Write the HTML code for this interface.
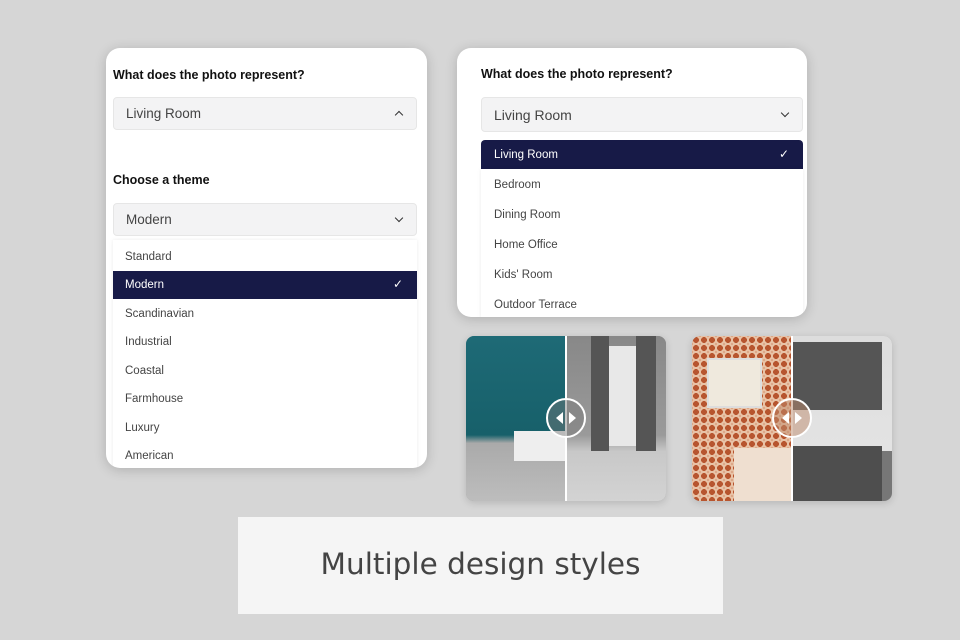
<!DOCTYPE html>
<html><head><style>
*{margin:0;padding:0;box-sizing:border-box}
body{width:960px;height:640px;background:#d6d6d6;position:relative;overflow:hidden;font-family:"Liberation Sans",Arial,sans-serif}
.a{position:absolute}
.card{position:absolute;background:#fff;border-radius:14px;box-shadow:0 2px 12px rgba(0,0,0,.18);overflow:hidden}
.lbl{position:absolute;font-weight:bold;font-size:12.5px;color:#111}
.sel{position:absolute;background:#f3f3f4;border:1px solid #e6e6e6;border-radius:4px;font-size:13.5px;color:#444;padding-left:12px;display:flex;align-items:center}
.it{position:absolute;font-size:11.5px;color:#444}
.band{position:absolute;background:#171a47;color:#fff;font-size:11.5px;display:flex;align-items:center}
.chev{position:absolute;right:14px;top:50%;width:6px;height:6px;border-right:1.5px solid #333;border-bottom:1.5px solid #333}
.ph{position:absolute;border-radius:8px;overflow:hidden;box-shadow:0 2px 8px rgba(0,0,0,.15)}
.knob{position:absolute;width:40px;height:40px;border:2px solid #fff;border-radius:50%;background:rgba(120,120,120,.45)}
.ck{position:absolute;right:14px;font-size:12px;font-weight:normal}
</style></head><body>

<div class="card" style="left:106px;top:48px;width:321px;height:420px">
 <div class="lbl" style="left:7px;top:20px">What does the photo represent?</div>
 <div class="sel" style="left:7px;top:49px;width:304px;height:33px">Living Room<span class="chev" style="transform:translateY(-2px) rotate(-135deg);margin-top:0"></span></div>
 <div class="lbl" style="left:7px;top:125px">Choose a theme</div>
 <div class="sel" style="left:7px;top:155px;width:304px;height:33px">Modern<span class="chev" style="transform:translateY(-5px) rotate(45deg)"></span></div>
 <div class="a" style="left:7px;top:192px;width:304px;height:230px;box-shadow:0 0 4px rgba(0,0,0,.08)"></div>
 <div class="it" style="left:19px;top:203px">Standard</div>
 <div class="band" style="left:7px;top:223px;width:304px;height:28px;padding-left:12px">Modern<span class="ck" style="top:6px">✓</span></div>
 <div class="it" style="left:19px;top:260px">Scandinavian</div>
 <div class="it" style="left:19px;top:288px">Industrial</div>
 <div class="it" style="left:19px;top:317px">Coastal</div>
 <div class="it" style="left:19px;top:345px">Farmhouse</div>
 <div class="it" style="left:19px;top:374px">Luxury</div>
 <div class="it" style="left:19px;top:402px">American</div>
</div>

<div class="card" style="left:457px;top:48px;width:350px;height:269px">
 <div class="lbl" style="left:24px;top:19px">What does the photo represent?</div>
 <div class="sel" style="left:24px;top:49px;width:322px;height:35px;font-size:14px">Living Room<span class="chev" style="transform:translateY(-5px) rotate(45deg)"></span></div>
 <div class="band" style="left:24px;top:92px;width:322px;height:29px;padding-left:13px;border-radius:4px 4px 0 0">Living Room<span class="ck" style="top:7px">✓</span></div>
 <div class="a" style="left:24px;top:121px;width:322px;height:150px;box-shadow:0 0 4px rgba(0,0,0,.08)"></div>
 <div class="it" style="left:37px;top:131px">Bedroom</div>
 <div class="it" style="left:37px;top:161px">Dining Room</div>
 <div class="it" style="left:37px;top:191px">Home Office</div>
 <div class="it" style="left:37px;top:221px">Kids' Room</div>
 <div class="it" style="left:37px;top:251px">Outdoor Terrace</div>
</div>

<div class="ph" style="left:466px;top:336px;width:200px;height:165px;background:#999">
 <div class="a" style="left:0;top:0;width:100px;height:165px;background:linear-gradient(#1e6a76,#17606a 60%,#aaa 65%,#bdbdbd)"></div>
 <div class="a" style="left:48px;top:95px;width:52px;height:30px;background:#eee"></div>
 <div class="a" style="left:100px;top:0;width:100px;height:165px;background:linear-gradient(#888,#9a9a9a 60%,#c8c8c8 70%,#d3d3d3)"></div>
 <div class="a" style="left:140px;top:10px;width:30px;height:100px;background:#e8e8e8"></div>
 <div class="a" style="left:125px;top:0;width:18px;height:115px;background:#555"></div>
 <div class="a" style="left:170px;top:0;width:20px;height:115px;background:#555"></div>
 <div class="a" style="left:99px;top:0;width:2px;height:165px;background:#fff"></div>
 <div class="knob" style="left:80px;top:62px"></div>
 <div class="a" style="left:90px;top:76px;width:0;height:0;border:6px solid transparent;border-right:7px solid #fff;border-left:0"></div>
 <div class="a" style="left:103px;top:76px;width:0;height:0;border:6px solid transparent;border-left:7px solid #fff;border-right:0"></div>
</div>

<div class="ph" style="left:692px;top:336px;width:200px;height:165px;background:#999">
 <div class="a" style="left:0;top:0;width:100px;height:165px;background:repeating-radial-gradient(circle at 4px 4px,#b7552f 0 3px,#e8c2a6 3px 5px) 0 0/8px 8px"></div>
 <div class="a" style="left:15px;top:22px;width:55px;height:50px;background:#efe9dd;border:2px solid #ddd"></div>
 <div class="a" style="left:42px;top:112px;width:58px;height:53px;background:#efdfd0"></div>
 <div class="a" style="left:100px;top:0;width:100px;height:165px;background:linear-gradient(#ddd,#e6e6e6)"></div>
 <div class="a" style="left:100px;top:6px;width:90px;height:68px;background:#555"></div>
 <div class="a" style="left:100px;top:110px;width:90px;height:55px;background:#4e4e4e"></div>
 <div class="a" style="left:190px;top:115px;width:10px;height:50px;background:#777"></div>
 <div class="a" style="left:99px;top:0;width:2px;height:165px;background:#fff"></div>
 <div class="knob" style="left:80px;top:62px;background:rgba(190,140,110,.5)"></div>
 <div class="a" style="left:90px;top:76px;width:0;height:0;border:6px solid transparent;border-right:7px solid #fff;border-left:0"></div>
 <div class="a" style="left:103px;top:76px;width:0;height:0;border:6px solid transparent;border-left:7px solid #fff;border-right:0"></div>
</div>

<div class="a" style="left:238px;top:517px;width:485px;height:97px;background:#f5f5f5;display:flex;align-items:center;justify-content:center;font-family:'DejaVu Sans','Liberation Sans',sans-serif;font-size:29.5px;color:#444;padding-bottom:4px">Multiple design styles</div>
</body></html>
